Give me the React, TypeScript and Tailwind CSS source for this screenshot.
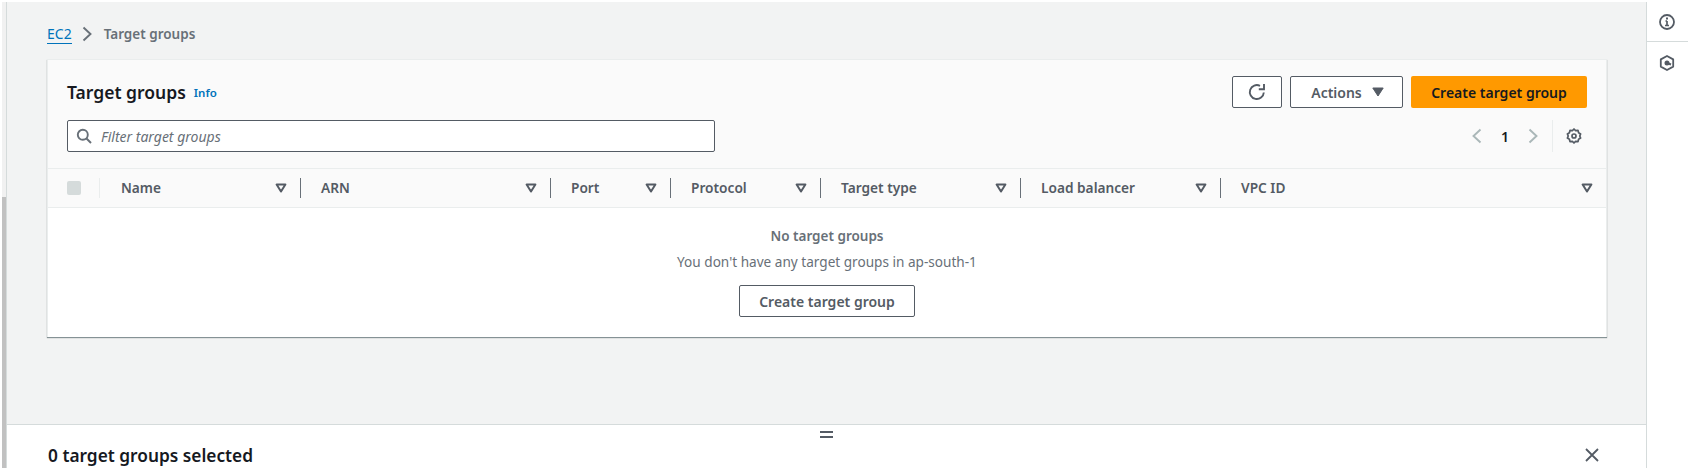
import React from "react";

const columns = [
  { label: "Name", width: "w-[200px]" },
  { label: "ARN", width: "w-[250px]" },
  { label: "Port", width: "w-[120px]" },
  { label: "Protocol", width: "w-[150px]" },
  { label: "Target type", width: "w-[200px]" },
  { label: "Load balancer", width: "w-[200px]" },
  { label: "VPC ID", width: "flex-1" },
];

const SortCaret = () => (
  <svg width="12" height="12" viewBox="0 0 12 12" className="shrink-0">
    <path d="M1.6 2.5h8.8L6 9.5z" fill="none" stroke="#545b64" strokeWidth="2" strokeLinejoin="round" />
  </svg>
);

const App: React.FC = () => {
  return (
    <div className="flex h-[470px] w-full overflow-hidden bg-white py-[2px] pl-[2px] font-['Noto_Sans',sans-serif]">
      {/* scrollbar */}
      <div className="flex w-[4px] shrink-0 flex-col bg-[#f1f1f1]">
        <div className="h-[195px]" />
        <div className="flex-1 bg-[#c1c1c1]" />
      </div>

      <div className="flex min-w-0 flex-1 flex-col border-x border-[#d5dbdb]">
        <main className="flex-1 bg-[#f2f3f3] pl-[40px] pr-[39px] pt-[20px]">
          <nav className="flex h-[24px] items-center text-[14px]">
            <span className="border-b border-[#0073bb] leading-[18px] text-[#0073bb]">EC2</span>
            <svg width="16" height="16" viewBox="0 0 16 16" className="ml-[7px] mr-[9px]">
              <path d="M4.5 1.5 11.5 8l-7 6.5" fill="none" stroke="#687078" strokeWidth="1.9" />
            </svg>
            <span className="text-[13.5px] font-semibold text-[#687078]">Target groups</span>
          </nav>

          <section className="mt-[13px] border-x border-t border-[#eaeded] shadow-[0_1px_1px_0_rgba(0,28,36,0.45)]">
            <div className="bg-[#fafafa] px-[19px] pb-[16px] pt-[16px]">
              <div className="flex h-[32px] items-center">
                <h1 className="mb-[1px] text-[17.5px] font-semibold leading-[22px] text-[#16191f]">Target groups</h1>
                <span className="ml-[8px] mt-[2px] text-[11.5px] font-semibold text-[#0073bb]">Info</span>
                <div className="ml-auto flex gap-[8px]">
                  <button className="flex h-[32px] w-[50px] items-center justify-center rounded-[2px] border border-[#545b64] bg-white">
                    <svg width="18" height="18" viewBox="0 0 18 18" fill="none" stroke="#545b64" strokeWidth="1.9">
                      <path d="M15.8 9.5A7 7 0 1 1 12 2.8" />
                      <path d="M16 1v5.2h-5.2" />
                    </svg>
                  </button>
                  <button className="flex h-[32px] w-[113px] items-center justify-center gap-[10px] rounded-[2px] border border-[#545b64] bg-white pl-[2px] text-[14px] font-semibold text-[#545b64]">
                    Actions
                    <svg width="12" height="10" viewBox="0 0 12 10">
                      <path d="M.8 1h10.4L6 9z" fill="#545b64" stroke="#545b64" strokeLinejoin="round" />
                    </svg>
                  </button>
                  <button className="h-[32px] w-[176px] rounded-[2px] bg-[#ff9900] text-[14px] font-semibold text-[#16191f]">
                    Create target group
                  </button>
                </div>
              </div>

              <div className="mt-[12px] flex items-center">
                <div className="flex h-[32px] w-[648px] items-center gap-[9px] rounded-[2px] border border-[#545b64] bg-white px-[8px]">
                  <svg width="16" height="16" viewBox="0 0 16 16" fill="none" stroke="#687078" strokeWidth="1.9">
                    <circle cx="6.8" cy="6.8" r="5" />
                    <path d="m10.5 10.5 4.5 4.5" />
                  </svg>
                  <span className="text-[14px] italic text-[#687078]">Filter target groups</span>
                </div>
                <div className="ml-auto flex h-[32px] items-center pr-[5px]">
                  <svg width="16" height="16" viewBox="0 0 16 16" fill="none" stroke="#aab7b8" strokeWidth="1.9">
                    <path d="M11.5 1.5 4.5 8l7 6.5" />
                  </svg>
                  <span className="ml-[14px] mr-[14px] w-[12px] text-center text-[14px] font-semibold text-[#16191f]">1</span>
                  <svg width="16" height="16" viewBox="0 0 16 16" fill="none" stroke="#aab7b8" strokeWidth="1.9">
                    <path d="M4.5 1.5 11.5 8l-7 6.5" />
                  </svg>
                  <div className="ml-[11px] mr-[13px] h-[32px] w-px bg-[#eaeded]" />
                  <svg width="16" height="16" viewBox="0 0 16 16" fill="none" stroke="#545b64" strokeWidth="1.7">
                    <path d="M8 1 9.6 2.6 12 2.4l.6 2.3 2 1.2L13.8 8l.8 2.1-2 1.2-.6 2.3-2.4-.2L8 15l-1.6-1.6-2.4.2-.6-2.3-2-1.2L2.2 8l-.8-2.1 2-1.2.6-2.3 2.4.2z" strokeLinejoin="round" />
                    <circle cx="8" cy="8" r="2" />
                  </svg>
                </div>
              </div>
            </div>

            <div className="flex h-[40px] items-center border-y border-[#eaeded] bg-[#fafafa]">
              <div className="flex w-[52px] shrink-0 items-center pl-[19px]">
                <div className="h-[14px] w-[14px] rounded-[2px] bg-[#d5dbdb]" />
                <div className="ml-[18px] h-[20px] w-px bg-[#eaeded]" />
              </div>
              {columns.map((col, i) => (
                <div key={col.label} className={`${col.width} flex h-[20px] items-center ${i > 0 ? "border-l border-[#687078] pl-[20px]" : "pl-[21px]"} pr-[13px]`}>
                  <span className="pt-[1px] text-[13.7px] font-semibold text-[#545b64]">{col.label}</span>
                  <span className="ml-auto"><SortCaret /></span>
                </div>
              ))}
            </div>

            <div className="flex h-[129px] flex-col items-center bg-white pt-[18px]">
              <p className="text-[13.5px] font-semibold leading-[20px] text-[#687078]">No target groups</p>
              <p className="mt-[6px] text-[13.6px] leading-[20px] text-[#687078]">You don't have any target groups in ap-south-1</p>
              <button className="mt-[13px] h-[32px] w-[176px] rounded-[2px] border border-[#545b64] bg-white text-[14px] font-semibold text-[#545b64]">
                Create target group
              </button>
            </div>
          </section>
        </main>

        {/* split panel */}
        <div className="relative flex h-[44px] shrink-0 items-start border-t border-[#d5dbdb] bg-white pl-[41px] pr-[46px] pt-[20px]">
          <div className="absolute left-[813px] top-[6px] flex w-[13px] flex-col gap-[3px]">
            <div className="h-[2px] bg-[#545b64]" />
            <div className="h-[2px] bg-[#545b64]" />
          </div>
          <h2 className="text-[17.3px] font-semibold leading-[22px] text-[#16191f]">0 target groups selected</h2>
          <svg width="16" height="16" viewBox="0 0 16 16" fill="none" stroke="#545b64" strokeWidth="1.8" className="ml-auto mt-[2px]">
            <path d="m2 2 12 12M14 2 2 14" />
          </svg>
        </div>
      </div>

      <aside className="w-[41px] shrink-0 bg-white">
        <div className="flex h-[40px] items-center justify-center border-b border-[#d5dbdb] pr-[1px]">
          <svg width="16" height="16" viewBox="0 0 16 16" fill="none" stroke="#545b64" strokeWidth="1.8">
            <circle cx="8" cy="8" r="7" />
            <path d="M8 7v4.5M6 11.5h4M6.5 7H8" strokeWidth="1.7" />
            <path d="M8 3.6v1.8" strokeWidth="2" />
          </svg>
        </div>
        <div className="flex justify-center pr-[1px] pt-[13px]">
          <svg width="16" height="16" viewBox="0 0 16 16" fill="none" stroke="#545b64" strokeWidth="1.8">
            <path d="M8 1 14.2 4.4v7.2L8 15 1.8 11.6V4.4z" strokeLinejoin="round" />
            <circle cx="8" cy="8" r="1.6" fill="#545b64" />
            <path d="M8 8l4 1.5" strokeWidth="2" />
          </svg>
        </div>
      </aside>
    </div>
  );
};

export default App;
